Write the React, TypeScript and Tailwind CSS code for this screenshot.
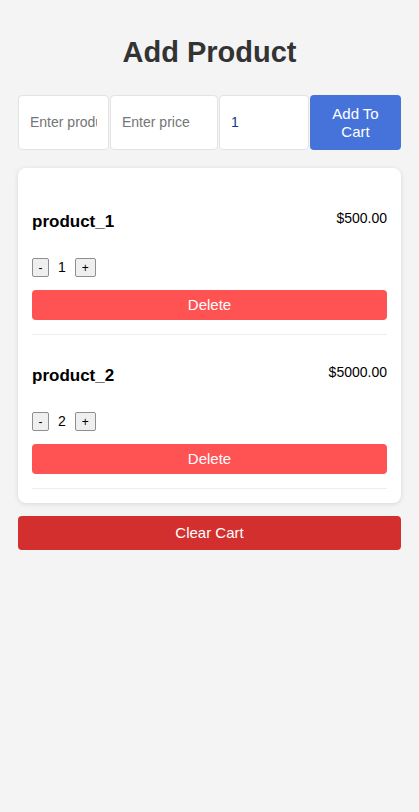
import React, { useState } from 'react';

type Item = { id: number; name: string; price: number; qty: number };

const font = { fontFamily: '"Liberation Sans", Arial, sans-serif' };

const App = () => {
  const [items, setItems] = useState<Item[]>([
    { id: 1, name: 'product_1', price: 500, qty: 1 },
    { id: 2, name: 'product_2', price: 5000, qty: 2 },
  ]);

  const change = (id: number, d: number) =>
    setItems(items.map((it) => (it.id === id ? { ...it, qty: Math.max(1, it.qty + d) } : it)));

  return (
    <div className="min-h-[812px] bg-[#f4f4f4] px-[18px]" style={font}>
      {/* Title */}
      <h1 className="pt-[31px] pb-[22px] text-center text-[29px] leading-[42px] font-bold text-[#333]">Add Product</h1>

      {/* Add form */}
      <div className="flex gap-[1px] h-[55px]">
        <input
          placeholder="Enter product name"
          className="w-[91px] min-w-0 rounded-[4px] border border-[#e3e3e3] bg-white pl-[11px] pr-[11px] text-[14px] text-black placeholder:text-[#757575] outline-none"
        />
        <input
          placeholder="Enter price"
          className="w-[108px] min-w-0 rounded-[4px] border border-[#e3e3e3] bg-white px-[11px] text-[14px] text-black placeholder:text-[#757575] outline-none"
        />
        <input
          defaultValue="1"
          className="w-[90px] min-w-0 rounded-[4px] border border-[#e3e3e3] bg-white px-[11px] text-[14px] text-[#0b3a8a] outline-none"
        />
        <button className="flex-1 rounded-[4px] bg-[#4673d9] px-[10px] text-[15px] leading-[18px] text-white">
          Add To Cart
        </button>
      </div>

      {/* Cart */}
      <div className="mt-[18px] flex flex-col gap-[2px] rounded-[8px] bg-white px-[14px] pt-[15px] pb-[14px] shadow-[0_1px_5px_rgba(0,0,0,0.12)]">
        {items.map((it) => (
          <div key={it.id} className="border-b border-[#eeeeee] pt-[28px] pb-[14px]">
            <div className="flex items-start justify-between">
              <h3 className="text-[17px] leading-[22px] font-bold text-black">{it.name}</h3>
              <span className="mt-[-1px] text-[14px] leading-[17px] text-black">${it.price.toFixed(2)}</span>
            </div>
            <div className="mt-[25px] flex h-[19px] items-center">
              <button
                onClick={() => change(it.id, -1)}
                className="h-[19px] w-[17px] rounded-[2px] border border-[#8f8f8f] bg-[#efefef] text-[12px] leading-none text-black"
              >
                -
              </button>
              <span className="mx-[9px] text-[14px] text-black">{it.qty}</span>
              <button
                onClick={() => change(it.id, 1)}
                className="h-[19px] w-[21px] rounded-[2px] border border-[#8f8f8f] bg-[#efefef] text-[12px] leading-none text-black"
              >
                +
              </button>
            </div>
            <button
              onClick={() => setItems(items.filter((x) => x.id !== it.id))}
              className="mt-[13px] h-[30px] w-full rounded-[4px] bg-[#ff5252] text-[15px] text-white"
            >
              Delete
            </button>
          </div>
        ))}
      </div>

      <button
        onClick={() => setItems([])}
        className="mt-[13px] h-[34px] w-full rounded-[4px] bg-[#d32f2f] text-[15px] text-white"
      >
        Clear Cart
      </button>
    </div>
  );
};

export default App;
